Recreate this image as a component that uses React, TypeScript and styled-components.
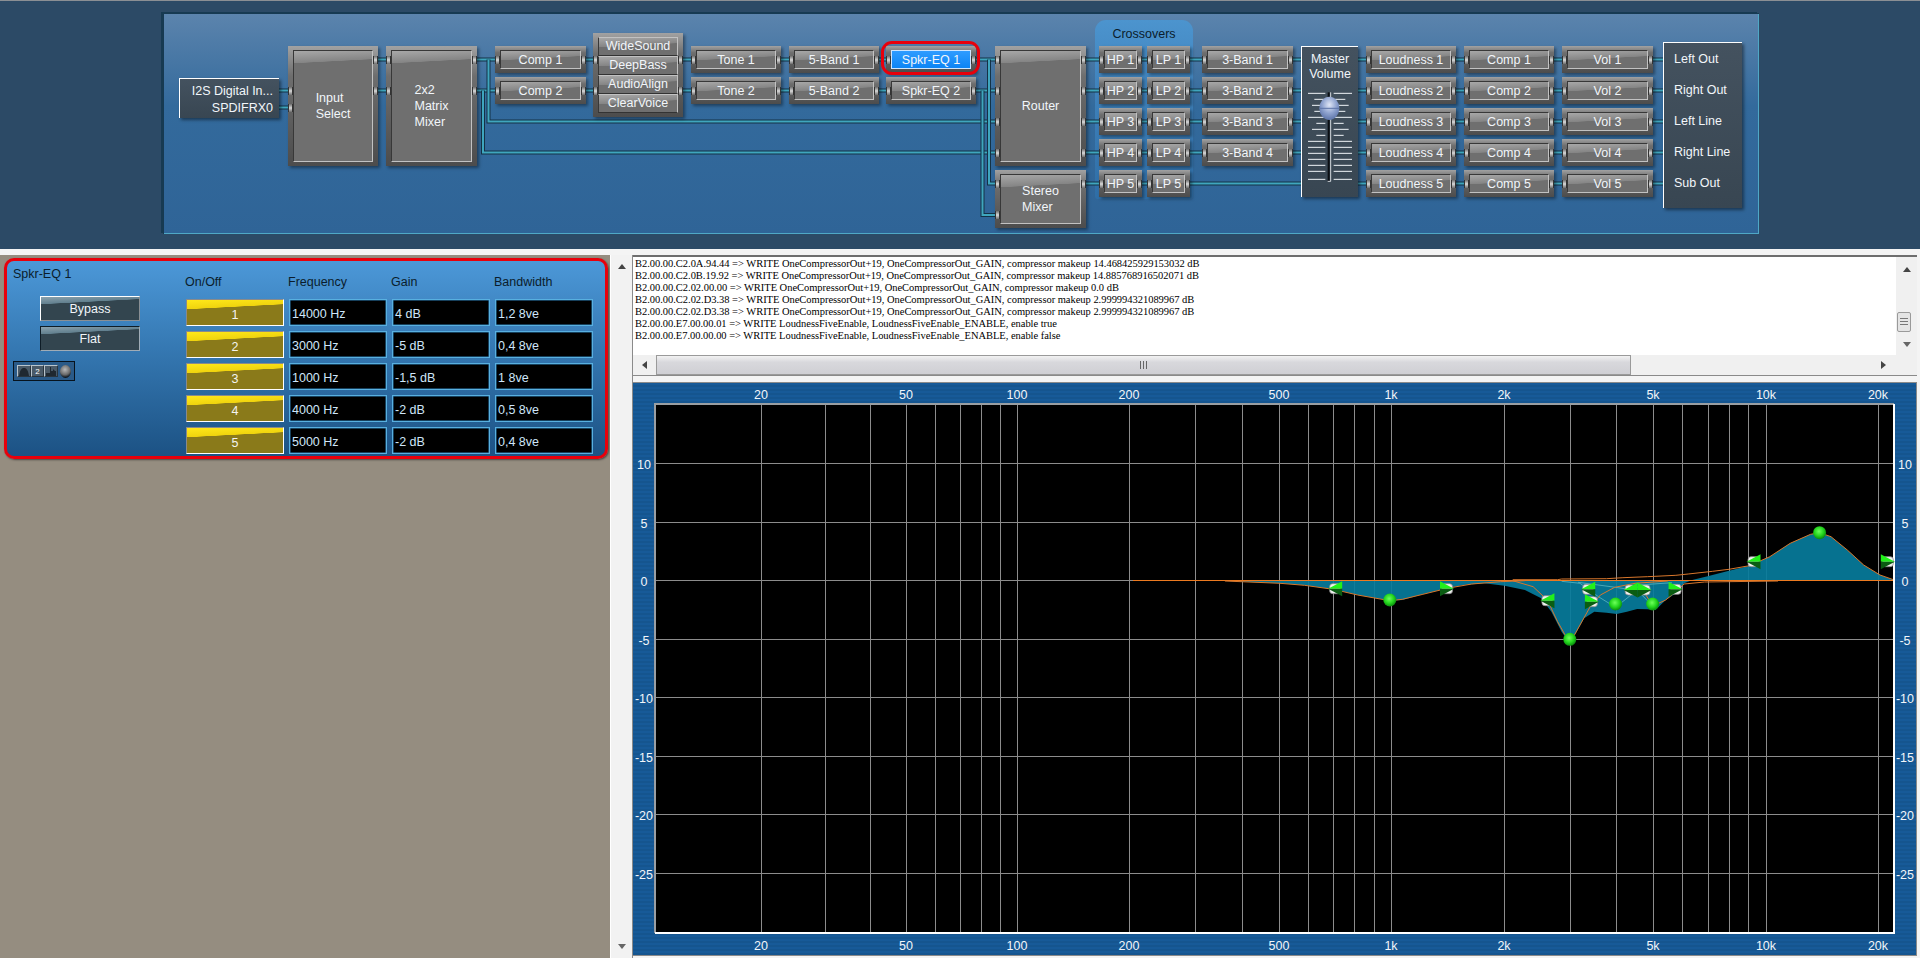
import React from 'react';
import styled, { createGlobalStyle, css } from 'styled-components';

const GlobalStyle = createGlobalStyle`
  html, body { margin: 0; padding: 0; height: 100%; background: #f0f0f0; }
  body { font-family: 'Liberation Sans', Arial, sans-serif; font-size: 12.5px; overflow: hidden; }
  * { box-sizing: border-box; }
`;

const Page = styled.div`
  width: 1920px;
  height: 958px;
  display: flex;
  flex-direction: column;
`;

/* ---------- signal flow diagram ---------- */

const TopBand = styled.div`
  height: 249px;
  flex: none;
  background: #2c4a66;
  border-top: 1px solid #8b8f94;
  padding: 12px 0 0 163px;
`;

const Canvas = styled.div`
  position: relative;
  width: 1596px;
  height: 221px;
  background: linear-gradient(#5c84ad, #336a9c 42%, #2f6497);
  box-shadow: -2px -1px 0 #173a52, inset 1px 1px 0 #173a52, inset -1px -1px 0 #4fa8c6;
`;

const WireLayer = styled.svg`
  position: absolute;
  left: 0;
  top: 0;
`;

const CrossoverTab = styled.div`
  position: absolute;
  left: 932px;
  top: 7px;
  width: 98px;
  height: 179px;
  border-radius: 11px 11px 3px 3px;
  background: linear-gradient(#4c94ce, #3f82bc 40%, #2f6ea6);
  color: #0b1d2c;
  text-align: center;
  line-height: 28px;
`;

const Frame = styled.div<{ $x: number; $y: number; $w: number; $h: number }>`
  position: absolute;
  left: ${(p) => p.$x - 163}px;
  top: ${(p) => p.$y - 13}px;
  width: ${(p) => p.$w}px;
  height: ${(p) => p.$h}px;
  padding: 4px 5px;
  background: linear-gradient(#a2a2a2, #6e6e6e 25%, #4c4c4c);
  box-shadow: 2px 2px 3px rgba(0, 0, 0, 0.4);
`;

const gloss = (hi: string, mid: string, base: string, px: number) => css`
  background: linear-gradient(177deg, ${hi} 0, ${mid} ${px}px, ${base} ${px + 0.5}px);
`;

const Face = styled.div<{ $active?: boolean; $tall?: boolean }>`
  height: 100%;
  display: flex;
  align-items: center;
  justify-content: center;
  white-space: pre-line;
  line-height: 16px;
  color: #f2f6fa;
  border: 1px solid #c2c2c2;
  border-top-color: #383838;
  border-left-color: #383838;
  ${(p) =>
    p.$active
      ? css`
          background: linear-gradient(#2f9cff, #0c84f5);
          border-color: #cfe6ff;
        `
      : gloss('#a8a8a8', '#858585', '#6f6f6f', p.$tall ? 12 : 9)}
`;

const Port = styled.span<{ $side: 'l' | 'r'; $y: number }>`
  position: absolute;
  top: ${(p) => p.$y - 4}px;
  ${(p) => (p.$side === 'l' ? 'left: 0' : 'right: 0')};
  width: 5px;
  height: 8px;
  border: 1px solid #333;
  border-width: 0 1px;
  background: linear-gradient(#6e6e6e, #d8d8d8 50%, #6e6e6e);
`;

const Ring = styled.span`
  position: absolute;
  left: -5px;
  right: -4px;
  top: -5px;
  bottom: -2px;
  border: 3px solid #e8000b;
  border-radius: 11px;
`;

const StackCell = styled(Face)`
  height: 19px;
  line-height: 17px;
  border-top-color: #c2c2c2;
  border-bottom-color: #333;
`;

const DarkBox = styled.div<{ $x: number; $y: number; $w: number; $h: number }>`
  position: absolute;
  left: ${(p) => p.$x - 163}px;
  top: ${(p) => p.$y - 13}px;
  width: ${(p) => p.$w}px;
  height: ${(p) => p.$h}px;
  background: linear-gradient(#44525f, #384652);
  border-top: 1px solid #fff;
  border-left: 1px solid #fff;
  box-shadow: 2px 2px 3px rgba(0, 0, 0, 0.45);
  color: #f2f6fa;
`;

const InputLines = styled(DarkBox)`
  padding: 4px 6px 0 0;
  text-align: right;
  line-height: 17px;
`;

const OutputLines = styled(DarkBox)`
  padding: 1px 0 0 10px;
  line-height: 31px;
`;

const MasterBox = styled(DarkBox)`
  padding-top: 5px;
  text-align: center;
  line-height: 15px;
`;

const FaderSvg = styled.svg`
  display: block;
  margin-top: 6px;
`;

type BlockProps = {
  x: number;
  y: number;
  w: number;
  h?: number;
  label: string;
  left?: number[];
  right?: number[];
  active?: boolean;
};

const Block = ({ x, y, w, h = 27, label, left = [], right = [], active }: BlockProps) => (
  <Frame $x={x} $y={y} $w={w} $h={h}>
    <Face $active={active} $tall={h > 30}>
      {h > 30 ? <div>{label}</div> : label}
    </Face>
    {left.map((c) => (
      <Port key={c} $side="l" $y={c - y} />
    ))}
    {right.map((c) => (
      <Port key={c} $side="r" $y={c - y} />
    ))}
    {active && <Ring />}
  </Frame>
);

const ROW_TOP = [46, 77, 108, 139, 170];
const ROW_MID = [59.5, 90.5, 121.5, 152.5, 183.5];

const rowColumn = (name: string, x: number, w: number, count = 5) =>
  Array.from({ length: count }, (_, i) => ({
    label: `${name} ${i + 1}`,
    x,
    y: ROW_TOP[i],
    w,
    left: [ROW_MID[i]],
    right: [ROW_MID[i]],
  }));

const BLOCKS: BlockProps[] = [
  ...rowColumn('Comp', 495, 91, 2),
  ...rowColumn('Tone', 691, 90, 2),
  ...rowColumn('5-Band', 789, 90, 2),
  ...rowColumn('HP', 1099, 43),
  ...rowColumn('LP', 1147, 43),
  ...rowColumn('3-Band', 1202, 91, 4),
  ...rowColumn('Loudness', 1366, 90),
  ...rowColumn('Comp', 1464, 90),
  ...rowColumn('Vol', 1562, 91),
  { label: 'Spkr-EQ 1', x: 886, y: 46, w: 90, left: [59.5], right: [59.5], active: true },
  { label: 'Spkr-EQ 2', x: 886, y: 77, w: 90, left: [90.5], right: [90.5] },
  { label: 'Input\nSelect', x: 288, y: 46, w: 90, h: 120, left: [90.5, 107.5], right: [59.5, 90.5] },
  { label: '2x2\nMatrix\nMixer', x: 386, y: 46, w: 91, h: 120, left: [59.5, 90.5], right: [59.5, 90.5] },
  { label: 'Router', x: 995, y: 46, w: 91, h: 120, left: ROW_MID.slice(0, 4), right: ROW_MID.slice(0, 4) },
  { label: 'Stereo\nMixer', x: 995, y: 170, w: 91, h: 58, left: [183.5, 215], right: [183.5] },
];

const WIRES = [
  'M279 90.5H290M279 107.5H290',
  'M376 59.5H388M376 90.5H388',
  'M475 59.5H497M475 90.5H497',
  'M488.5 59.5V121.5H997M483 90.5V152.5H997',
  'M584 59.5H595M584 90.5H595M681 59.5H693M681 90.5H693',
  'M779 59.5H791M779 90.5H791M877 59.5H888M877 90.5H888',
  'M974 59.5H997M974 90.5H997',
  'M989 59.5V183.5H997M982.5 90.5V215H997',
  ...ROW_MID.map((y) => `M1084 ${y}H1101M1140 ${y}H1149`),
  ...ROW_MID.slice(0, 4).map((y) => `M1188 ${y}H1204M1291 ${y}H1302`),
  'M1188 183.5H1302',
  ...ROW_MID.map((y) => `M1357 ${y}H1368M1454 ${y}H1466M1552 ${y}H1564M1651 ${y}H1664`),
];

const StackBlock = () => (
  <Frame $x={593} $y={33} $w={90} $h={84}>
    {['WideSound', 'DeepBass', 'AudioAlign', 'ClearVoice'].map((t) => (
      <StackCell key={t}>{t}</StackCell>
    ))}
    {[59.5, 90.5].map((c) => (
      <React.Fragment key={c}>
        <Port $side="l" $y={c - 33} />
        <Port $side="r" $y={c - 33} />
      </React.Fragment>
    ))}
  </Frame>
);

const FADER_TICKS: [number, number, number][] = [
  [160, 53, 185], [178, 72, 165], [196, 65, 175], [214, 72, 165], [232, 53, 185],
  [250, 78, 160], [268, 65, 175], [286, 78, 160], [304, 53, 185], [322, 53, 185],
  [340, 53, 185], [358, 53, 185], [376, 53, 185], [394, 53, 185], [418, 53, 185],
];

const Fader = () => (
  <FaderSvg width={55} height={100} viewBox="35 144 165 300">
    {FADER_TICKS.map(([y, l, r]) => (
      <path key={y} d={`M${l} ${y}H105M130 ${y}H${r}`} stroke="#f0f4f8" strokeWidth={3} />
    ))}
    <path d="M115 157V424" stroke="#0b0f14" strokeWidth={6} />
    <path d="M121 157V424H112" stroke="#f0f4f8" strokeWidth={2.5} fill="none" />
    <defs>
      <radialGradient id="knob" cx="50%" cy="35%" r="65%">
        <stop offset="0%" stopColor="#dfe6f6" />
        <stop offset="55%" stopColor="#8fa3cf" />
        <stop offset="100%" stopColor="#5d74a8" />
      </radialGradient>
    </defs>
    <ellipse cx={117} cy={205} rx={30} ry={35} fill="url(#knob)" />
    <path d="M88 205H146" stroke="#5d74a8" strokeWidth={3} />
  </FaderSvg>
);

const Diagram = () => (
  <TopBand>
    <Canvas>
      <CrossoverTab>Crossovers</CrossoverTab>
      <WireLayer width={1596} height={221} viewBox="163 13 1596 221">
        {WIRES.map((d) => (
          <g key={d} fill="none">
            <path d={d} stroke="#143246" strokeWidth={4} />
            <path d={d} stroke="#3fa6be" strokeWidth={2} />
          </g>
        ))}
      </WireLayer>
      {BLOCKS.map((b) => (
        <Block key={`${b.label}${b.x}`} {...b} />
      ))}
      <StackBlock />
      <InputLines $x={179} $y={78} $w={100} $h={40}>
        I2S Digital In...
        <br />
        SPDIFRX0
      </InputLines>
      <MasterBox $x={1301} $y={46} $w={57} $h={151}>
        Master
        <br />
        Volume
        <Fader />
      </MasterBox>
      <OutputLines $x={1663} $y={42} $w={79} $h={166}>
        Left Out
        <br />
        Right Out
        <br />
        Left Line
        <br />
        Right Line
        <br />
        Sub Out
      </OutputLines>
    </Canvas>
  </TopBand>
);

/* ---------- EQ panel ---------- */

const Lower = styled.div`
  flex: 1;
  display: flex;
  background: #f4f4f4;
  padding-top: 6px;
`;

const LeftPane = styled.div`
  width: 610px;
  flex: none;
  background: #958d80;
  padding: 3px 0 0 4px;
`;

const EqPanel = styled.div`
  width: 604px;
  height: 201px;
  display: flex;
  border: 3px solid #e8000b;
  border-radius: 10px;
  background: linear-gradient(#4c98d8, #3578b2 45%, #1c5284);
  box-shadow: 1px 1px 2px rgba(0, 0, 0, 0.5);
  color: #0b1d2c;
`;

const EqSide = styled.div`
  width: 179px;
  flex: none;
  padding: 5px 0 0 6px;
`;

const EqTitle = styled.div`
  line-height: 16px;
`;

const SoftButton = styled.div<{ $pressed?: boolean }>`
  width: 100px;
  height: 25px;
  margin-left: 27px;
  display: flex;
  align-items: center;
  justify-content: center;
  color: #f2f6fa;
  border: 1px solid;
  border-color: ${(p) => (p.$pressed ? '#0e1c26 #a0acb6 #a0acb6 #0e1c26' : '#fff #8a8f94 #8a8f94 #fff')};
  ${gloss('#8ca2ae', '#62808f', '#33454f', 7)}
`;

const BypassButton = styled(SoftButton)`
  margin-top: 14px;
  margin-bottom: 5px;
`;

const MiniStrip = styled.div`
  width: 62px;
  height: 20px;
  margin-top: 10px;
  padding: 3px;
  display: flex;
  align-items: center;
  gap: 0;
  background: #2a5a88;
  border: 1px solid #07131d;
`;

const MiniCell = styled.div`
  width: 14px;
  height: 12px;
  display: flex;
  align-items: center;
  justify-content: center;
  font-size: 8px;
  color: #fff;
  background: #4a5a68;
  border: 1px solid #b9c4cc;
  border-right-color: #29343d;
  border-bottom-color: #29343d;
  svg {
    display: block;
  }
`;

const MiniKnob = styled.div`
  width: 12px;
  height: 13px;
  margin-left: 2px;
  border-radius: 50%;
  background: radial-gradient(circle at 45% 35%, #b8b8b8 0, #6a6a6a 50%, #101820 75%);
`;

const EqTable = styled.div`
  padding-top: 13px;
  display: grid;
  grid-template-columns: repeat(4, 98px);
  grid-template-rows: 20px repeat(5, 27px);
  column-gap: 5px;
  row-gap: 5px;
  align-content: start;
`;

const EqHeader = styled.div`
  line-height: 16px;
  margin-left: -1px;
`;

const EnableButton = styled.div`
  display: flex;
  align-items: center;
  justify-content: center;
  padding-top: 4px;
  color: #f4f4f0;
  border: 1px solid;
  border-color: #8a8a8a #fff #fff #8a8a8a;
  ${gloss('#ffe81a', '#f0d40e', '#8a7a1a', 9)}
`;

const ValueCell = styled.div`
  display: flex;
  align-items: center;
  padding: 2px 0 0 2px;
  background: #000;
  color: #cfe6fa;
  border: 1px solid #58b0e0;
  box-shadow: inset 0 0 0 0.5px #2f80b8;
`;

const BANDS = [
  ['14000 Hz', '4 dB', '1,2 8ve'],
  ['3000 Hz', '-5 dB', '0,4 8ve'],
  ['1000 Hz', '-1,5 dB', '1 8ve'],
  ['4000 Hz', '-2 dB', '0,5 8ve'],
  ['5000 Hz', '-2 dB', '0,4 8ve'],
];

const EqEditor = () => (
  <EqPanel>
    <EqSide>
      <EqTitle>Spkr-EQ 1</EqTitle>
      <BypassButton>Bypass</BypassButton>
      <SoftButton $pressed>Flat</SoftButton>
      <MiniStrip>
        <MiniCell>
          <svg width="12" height="10" viewBox="0 0 12 10">
            <path d="M1 10C2 3 4 2 6 2S10 3 11 10Z" fill="#1f2830" />
          </svg>
        </MiniCell>
        <MiniCell>2</MiniCell>
        <MiniCell>
          <svg width="12" height="10" viewBox="0 0 12 10">
            <path d="M1 10V7H5V1H6V5H8V3L10 5H11V10Z" fill="#1f2830" />
          </svg>
        </MiniCell>
        <MiniKnob />
      </MiniStrip>
    </EqSide>
    <EqTable>
      {['On/Off', 'Frequency', 'Gain', 'Bandwidth'].map((t) => (
        <EqHeader key={t}>{t}</EqHeader>
      ))}
      {BANDS.map((band, i) => (
        <React.Fragment key={i}>
          <EnableButton>{i + 1}</EnableButton>
          {band.map((v) => (
            <ValueCell key={v}>{v}</ValueCell>
          ))}
        </React.Fragment>
      ))}
    </EqTable>
  </EqPanel>
);

/* ---------- scroll bars ---------- */

const arrowShape = {
  up: 'border-width: 0 4px 5px; border-color: transparent transparent #444;',
  down: 'border-width: 5px 4px 0; border-color: #666 transparent transparent;',
  left: 'border-width: 4px 5px 4px 0; border-color: transparent #444 transparent transparent;',
  right: 'border-width: 4px 0 4px 5px; border-color: transparent transparent transparent #444;',
};

const Arrow = styled.i<{ $dir: keyof typeof arrowShape }>`
  display: block;
  width: 0;
  height: 0;
  border-style: solid;
  ${(p) => arrowShape[p.$dir]}
`;

const Splitter = styled.div`
  width: 22px;
  flex: none;
  display: flex;
  flex-direction: column;
  align-items: center;
  justify-content: space-between;
  padding: 9px 0 9px;
  background: #f2f2f2;
  border-left: 1px solid #fff;
`;

const RightPane = styled.div`
  flex: 1;
  display: flex;
  flex-direction: column;
  padding-right: 3px;
  border-left: 1px solid #8a8a8a;
`;

const LogBox = styled.div`
  height: 121px;
  flex: none;
  display: grid;
  grid-template-columns: 1fr 21px;
  grid-template-rows: 1fr 20px;
  border-top: 2px solid #6e6e6e;
  border-bottom: 1px solid #8a8a8a;
  background: #fff;
`;

const LogText = styled.div`
  padding: 1px 0 0 2px;
  font-family: 'Liberation Serif', 'Times New Roman', serif;
  font-size: 10.5px;
  letter-spacing: -0.03px;
  line-height: 12px;
  color: #000;
  white-space: pre;
  overflow: hidden;
`;

const VBar = styled.div`
  display: flex;
  flex-direction: column;
  align-items: center;
  padding-top: 10px;
  background: #f0f0f0;
`;

const VThumb = styled.div`
  width: 14px;
  height: 20px;
  margin: 40px 0 10px;
  margin-right: 5px;
  border: 1px solid #9a9a9a;
  border-radius: 2px;
  background: repeating-linear-gradient(#777 0 1px, #e6e6e6 1px 3px) center / 8px 9px no-repeat, #e4e4e4;
`;

const HBar = styled.div`
  display: flex;
  align-items: center;
  background: #f0f0f0;
  padding-right: 10px;
`;

const HArrowBox = styled.div`
  width: 23px;
  flex: none;
  display: flex;
  justify-content: center;
`;

const HThumb = styled.div`
  width: 975px;
  height: 20px;
  border: 1px solid #9a9a9a;
  background: repeating-linear-gradient(90deg, #666 0 1px, transparent 1px 3px) center / 7px 8px no-repeat,
    linear-gradient(#f2f2f2, #d8d8dc 35%, #cfcfd4);
`;

const HSpace = styled.div`
  flex: 1;
`;

const LOG_LINES = [
  'B2.00.00.C2.0A.94.44 => WRITE OneCompressorOut+19, OneCompressorOut_GAIN, compressor makeup 14.468425929153032 dB',
  'B2.00.00.C2.0B.19.92 => WRITE OneCompressorOut+19, OneCompressorOut_GAIN, compressor makeup 14.885768916502071 dB',
  'B2.00.00.C2.02.00.00 => WRITE OneCompressorOut+19, OneCompressorOut_GAIN, compressor makeup 0.0 dB',
  'B2.00.00.C2.02.D3.38 => WRITE OneCompressorOut+19, OneCompressorOut_GAIN, compressor makeup 2.999994321089967 dB',
  'B2.00.00.C2.02.D3.38 => WRITE OneCompressorOut+19, OneCompressorOut_GAIN, compressor makeup 2.999994321089967 dB',
  'B2.00.00.E7.00.00.01 => WRITE LoudnessFiveEnable, LoudnessFiveEnable_ENABLE, enable true',
  'B2.00.00.E7.00.00.00 => WRITE LoudnessFiveEnable, LoudnessFiveEnable_ENABLE, enable false',
];

const LogView = () => (
  <LogBox>
    <LogText>{LOG_LINES.join('\n')}</LogText>
    <VBar>
      <Arrow $dir="up" />
      <VThumb />
      <Arrow $dir="down" />
    </VBar>
    <HBar>
      <HArrowBox>
        <Arrow $dir="left" />
      </HArrowBox>
      <HThumb />
      <HSpace />
      <Arrow $dir="right" />
    </HBar>
    <VBar />
  </LogBox>
);

/* ---------- frequency response graph ---------- */

const GraphPanel = styled.div`
  width: 1283px;
  height: 572px;
  margin-top: 7px;
  background: repeating-linear-gradient(#175a98 0 2px, #15558f 2px 4px);
  outline: 1px solid #8a8a8a;
`;

const GraphSvg = styled.svg`
  display: block;
  text {
    font-family: 'Liberation Sans', Arial, sans-serif;
    font-size: 12.5px;
    fill: #f2f6fa;
    text-anchor: middle;
  }
`;

const PLOT = { x: 22, y: 21, w: 1239, h: 529 };
const X0 = 633;
const Y0 = 383;

const GRID_X = [
  761.4, 825.4, 870.4, 906.2, 935.2, 960.5, 981.1, 1000.5, 1017.3, 1129.5, 1195.5, 1242.4, 1279, 1308.6, 1333.5,
  1354.7, 1374.3, 1391.4, 1504.5, 1570.2, 1616.3, 1653, 1682.4, 1708.6, 1729.4, 1748.6, 1766.5, 1878.4,
];
const FREQ_LABELS: [string, number][] = [
  ['20', 761], ['50', 906], ['100', 1017], ['200', 1129], ['500', 1279],
  ['1k', 1391], ['2k', 1504], ['5k', 1653], ['10k', 1766], ['20k', 1878],
];
const DB_LINES = [10, 5, 0, -5, -10, -15, -20, -25];
const crisp = (v: number) => Math.floor(v) + 0.5;
const dbY = (db: number) => crisp(580.7 - 11.7 * db - Y0);

// traced from the curve, as offsets into a 640x180 crop at 2.45x / 3x
type Pt = [number, number];
const toXY = ([zx, zy]: Pt): Pt => [1280 + zx / 2.45 - X0, 500 + zy / 3 - Y0];
const line = (pts: Pt[]) =>
  pts
    .map(toXY)
    .map(([x, y]) => `${x.toFixed(1)},${y.toFixed(1)}`)
    .join(' ');

const RESPONSE: Pt[] = [
  [-135, 243], [0, 250], [60, 256], [130, 268], [190, 285], [250, 298], [270, 302], [300, 300], [350, 283],
  [410, 265], [450, 255], [500, 250], [550, 257], [600, 270], [640, 295], [665, 335], [690, 395], [710, 430],
  [725, 400], [745, 355], [770, 335], [800, 338], [825, 342], [850, 335], [875, 327], [900, 328], [920, 330],
  [945, 300], [970, 280], [990, 250], [1010, 240], [1050, 228], [1100, 212], [1150, 197], [1200, 170],
  [1250, 130], [1300, 103], [1322, 98], [1350, 110], [1390, 150], [1430, 195], [1470, 225], [1505, 240],
];

const ORANGE_CURVES: Pt[][] = [
  [[-135, 243], [0, 250], [60, 256], [130, 268], [190, 285], [250, 298], [270, 302], [300, 298], [350, 283], [410, 265], [470, 252], [540, 245], [600, 242]],
  [[570, 242], [620, 260], [655, 300], [680, 365], [710, 430], [735, 375], [760, 320], [785, 285], [820, 262], [870, 250], [950, 243]],
  [[570, 239], [680, 239], [690, 237], [800, 236], [840, 233], [900, 230], [970, 226], [1000, 222], [1060, 214], [1100, 208], [1150, 197], [1200, 170], [1250, 130], [1300, 103], [1322, 98], [1350, 110], [1390, 150], [1430, 195], [1470, 225], [1505, 240]],
  [[880, 252], [913, 318], [945, 300], [970, 275], [990, 252], [1040, 246], [1220, 243]],
];
const PALE_CURVES: Pt[][] = [
  [[690, 244], [735, 250], [780, 290], [822, 322], [860, 285], [880, 255], [960, 248]],
  [[730, 247], [822, 262], [876, 272], [913, 318]],
];

const PEAKS: Pt[] = [[269, 300], [710, 418], [822, 312], [913, 312], [1322, 98]];
const HANDLES: { at: Pt; dir: 'l' | 'r' }[] = [
  { at: [118, 266], dir: 'l' },
  { at: [392, 266], dir: 'r' },
  { at: [638, 302], dir: 'l' },
  { at: [747, 305], dir: 'r' },
  { at: [738, 268], dir: 'l' },
  { at: [842, 270], dir: 'l' },
  { at: [876, 270], dir: 'r' },
  { at: [952, 268], dir: 'r' },
  { at: [1143, 185], dir: 'l' },
  { at: [1472, 185], dir: 'r' },
];

const Handle = ({ at, dir }: { at: Pt; dir: 'l' | 'r' }) => {
  const [sx, sy] = toXY(at);
  const tip = dir === 'l' ? sx : sx + 14;
  const base = dir === 'l' ? sx + 14 : sx;
  return (
    <g>
      <rect x={sx + 1.5} y={sy - 5} width={11} height={10} rx={3} fill="#f0f0f0" stroke="#8a8a8a" strokeWidth={0.8} />
      <polygon points={`${tip},${sy} ${base},${sy - 7.5} ${base},${sy}`} fill="#22f01a" />
      <polygon points={`${tip},${sy} ${base},${sy} ${base},${sy + 7.5}`} fill="#0a5c12" />
    </g>
  );
};

const Graph = () => (
  <GraphPanel>
    <GraphSvg width={1283} height={572} viewBox="0 0 1283 572">
      <defs>
        <radialGradient id="peak" cx="45%" cy="40%" r="60%">
          <stop offset="0%" stopColor="#6dff5a" />
          <stop offset="60%" stopColor="#22d41c" />
          <stop offset="100%" stopColor="#0a8a0e" />
        </radialGradient>
        <clipPath id="plot">
          <rect x={PLOT.x} y={PLOT.y} width={PLOT.w} height={PLOT.h} />
        </clipPath>
      </defs>
      <rect x={PLOT.x} y={PLOT.y} width={PLOT.w} height={PLOT.h} fill="#000" />
      {GRID_X.map((x) => (
        <path key={x} d={`M${crisp(x - X0)} ${PLOT.y}V${PLOT.y + PLOT.h}`} stroke="#8c8c8c" strokeWidth={1} />
      ))}
      {DB_LINES.map((db) => (
        <path key={db} d={`M${PLOT.x} ${dbY(db)}H${PLOT.x + PLOT.w}`} stroke="#8c8c8c" strokeWidth={1} />
      ))}
      <g clipPath="url(#plot)">
        <polygon points={line(RESPONSE)} fill="#067c9c" fillOpacity={0.92} />
        {PALE_CURVES.map((c, i) => (
          <polyline key={i} points={line(c)} fill="none" stroke="#4aa9b8" strokeWidth={1} />
        ))}
        <path d={`M${1133 - X0} ${dbY(0)}H${PLOT.x + PLOT.w}`} stroke="#ec7a20" strokeWidth={1.2} />
        {ORANGE_CURVES.map((c, i) => (
          <polyline key={i} points={line(c)} fill="none" stroke="#d9772c" strokeWidth={1} />
        ))}
      </g>
      <path d={`M${PLOT.x} ${PLOT.y + PLOT.h}V${PLOT.y}H${PLOT.x + PLOT.w}`} fill="none" stroke="#9a9ea2" strokeWidth={2} />
      <path d={`M${PLOT.x} ${PLOT.y + PLOT.h}H${PLOT.x + PLOT.w}V${PLOT.y}`} fill="none" stroke="#fff" strokeWidth={2} />
      {HANDLES.map((h) => (
        <Handle key={h.at.join()} {...h} />
      ))}
      {PEAKS.map((p) => {
        const [cx, cy] = toXY(p);
        return <circle key={p.join()} cx={cx} cy={cy} r={6.5} fill="url(#peak)" />;
      })}
      {FREQ_LABELS.map(([t, x]) => (
        <React.Fragment key={t}>
          <text x={x - X0} y={16}>{t}</text>
          <text x={x - X0} y={567}>{t}</text>
        </React.Fragment>
      ))}
      {DB_LINES.map((db) => (
        <React.Fragment key={db}>
          <text x={11} y={dbY(db) + 5}>{db}</text>
          <text x={1272} y={dbY(db) + 5}>{db}</text>
        </React.Fragment>
      ))}
    </GraphSvg>
  </GraphPanel>
);

export default function App() {
  return (
    <Page>
      <GlobalStyle />
      <Diagram />
      <Lower>
        <LeftPane>
          <EqEditor />
        </LeftPane>
        <Splitter>
          <Arrow $dir="up" />
          <Arrow $dir="down" />
        </Splitter>
        <RightPane>
          <LogView />
          <Graph />
        </RightPane>
      </Lower>
    </Page>
  );
}
